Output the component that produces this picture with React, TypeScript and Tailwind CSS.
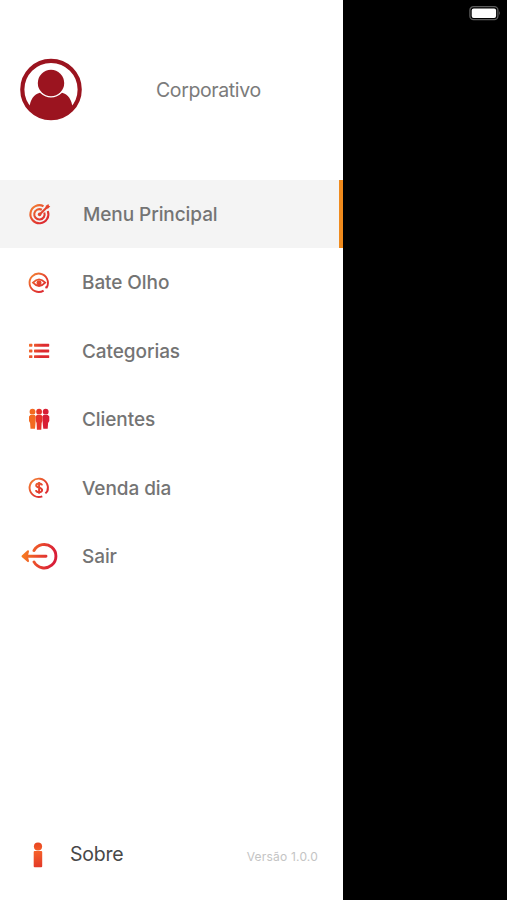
import React from "react";

interface MenuItem {
  id: string;
  label: string;
  icon: React.ComponentType;
  active?: boolean;
}

const menuItems: MenuItem[] = [
  { id: "menu-principal", label: "Menu Principal", icon: TargetIcon, active: true },
  { id: "bate-olho", label: "Bate Olho", icon: EyeIcon },
  { id: "categorias", label: "Categorias", icon: ListIcon },
  { id: "clientes", label: "Clientes", icon: PeopleIcon },
  { id: "venda-dia", label: "Venda dia", icon: DollarIcon },
  { id: "sair", label: "Sair", icon: ExitIcon },
];

export default function App() {
  return (
    <div className="flex h-screen w-full overflow-hidden bg-black font-['Inter',sans-serif]">
      <GradientDefs />
      <aside className="flex h-full w-[343px] shrink-0 flex-col bg-white">
        <header className="flex h-[180px] items-start pl-5 pt-[58px]">
          <Avatar />
          <span className="ml-[74px] mt-[17px] text-[19.5px] leading-[30px] tracking-[-0.38px] text-[#7b7b7b]">
            Corporativo
          </span>
        </header>

        <nav className="flex flex-col">
          {menuItems.map((item) => (
            <MenuRow key={item.id} item={item} />
          ))}
        </nav>

        <footer className="mt-auto flex h-[90px] items-center">
          <div className="flex w-[70px] pl-[33px]">
            <InfoIcon />
          </div>
          <span className="text-[19.5px] tracking-[-0.2px] text-[#484848]">Sobre</span>
          <span className="ml-auto mr-[25px] mt-1 text-xs tracking-[0.2px] text-[#c4c4c4]">
            Versão 1.0.0
          </span>
        </footer>
      </aside>

      <div className="flex flex-1 items-start justify-end pr-[6px] pt-[6px]">
        <Battery />
      </div>
    </div>
  );
}

function MenuRow({ item }: { item: MenuItem }) {
  const Icon = item.icon;
  return (
    <a
      className={
        item.active
          ? "flex h-[68.4px] items-center border-r-4 border-[#ef8a1d] bg-[#f4f4f4]"
          : "flex h-[68.4px] items-center"
      }
    >
      <span
        className={
          item.active
            ? "flex w-[83px] shrink-0 pl-[21px]"
            : "flex w-[82px] shrink-0 pl-5"
        }
      >
        <Icon />
      </span>
      <span className="pt-0.5 text-[19px] font-medium tracking-[-0.08px] text-[#747474]">
        {item.label}
      </span>
    </a>
  );
}

/* Shared orange to red gradients used by every menu icon */
function GradientDefs() {
  return (
    <svg className="absolute h-0 w-0" aria-hidden="true">
      <defs>
        <linearGradient id="warm" gradientUnits="userSpaceOnUse" x1="9" y1="5" x2="27" y2="24">
          <stop offset="0" stopColor="#f58a33" />
          <stop offset="0.5" stopColor="#e5452f" />
          <stop offset="1" stopColor="#d91f32" />
        </linearGradient>
        <linearGradient id="warmList" gradientUnits="userSpaceOnUse" x1="8" y1="10" x2="22" y2="14">
          <stop offset="0" stopColor="#f5702a" />
          <stop offset="1" stopColor="#dd2a30" />
        </linearGradient>
        <linearGradient id="warmWide" gradientUnits="userSpaceOnUse" x1="2" y1="10" x2="34" y2="18">
          <stop offset="0" stopColor="#f7801f" />
          <stop offset="0.5" stopColor="#ea4a2c" />
          <stop offset="1" stopColor="#d81e38" />
        </linearGradient>
        <linearGradient id="warmTall" gradientUnits="userSpaceOnUse" x1="0" y1="0" x2="4" y2="25">
          <stop offset="0" stopColor="#e5401f" />
          <stop offset="0.4" stopColor="#f5602a" />
          <stop offset="1" stopColor="#e33a28" />
        </linearGradient>
      </defs>
    </svg>
  );
}

function Avatar() {
  return (
    <svg width="62" height="63" viewBox="0 0 62 63">
      <circle cx="31" cy="31.5" r="28.7" fill="#fff" stroke="#9b141f" strokeWidth="4.2" />
      <circle cx="31" cy="25" r="13.2" fill="#9b141f" />
      <path
        d="M9.500 50 C10 42 14 36 20 34.800 C26 41.200 36 41.200 42 34.800 C48 36 52 42 52.500 50 C47 56.500 39.500 60 31 60 C22.500 60 15 56.500 9.500 50Z"
        fill="#9b141f"
      />
    </svg>
  );
}

function TargetIcon() {
  return (
    <svg width="38" height="28" viewBox="0 0 38 28" fill="none" stroke="url(#warm)" strokeWidth="2.100">
      <path d="M22.500 6.200 A9 9 0 1 0 26.800 11" />
      <path d="M20.800 9.700 A5.200 5.200 0 1 0 23.300 12.500" />
      <circle cx="18.600" cy="14.400" r="1.800" fill="url(#warm)" stroke="none" />
      <path d="M18.600 14.400 L27.500 5.700" />
      <path d="M24.300 8.800 L24.800 5.800 L27.500 4 L27.800 5.800 L29.300 6.200 L27.200 8.600Z" fill="url(#warm)" stroke="none" />
    </svg>
  );
}

function EyeIcon() {
  return (
    <svg width="38" height="28" viewBox="0 0 38 28" fill="none" stroke="url(#warm)" strokeWidth="1.900">
      <path d="M23.600 21.600 A9.200 9.200 0 1 1 26.700 18.400 L25.300 18.200" />
      <path d="M13 13.700 Q19 7.100 25.200 13.700 Q19 20.300 13 13.700Z" />
      <circle cx="19" cy="13.700" r="2.500" fill="url(#warm)" stroke="none" />
    </svg>
  );
}

function ListIcon() {
  return (
    <svg width="38" height="28" viewBox="0 0 38 28" fill="url(#warmList)">
      <rect x="9" y="6.800" width="3.400" height="2.900" rx="0.600" />
      <rect x="14" y="6.800" width="15.200" height="2.900" rx="0.600" />
      <rect x="9" y="12.500" width="3.400" height="2.900" rx="0.600" />
      <rect x="14" y="12.500" width="15.200" height="2.900" rx="0.600" />
      <rect x="9" y="18.200" width="3.400" height="2.900" rx="0.600" />
      <rect x="14" y="18.200" width="15.200" height="2.900" rx="0.600" />
    </svg>
  );
}

function PeopleIcon() {
  return (
    <svg width="38" height="28" viewBox="0 0 38 28">
      <g fill="#f36a20">
        <circle cx="12.500" cy="6.700" r="2.900" />
        <path d="M10.300 9.900 H14.800 L15.700 11.500 L15.500 18 L15 23.700 H10.500 L10.100 18 L9 16 V11.500Z" />
      </g>
      <g fill="#d81f35">
        <circle cx="25.700" cy="6.700" r="2.900" />
        <path d="M23.400 9.900 H27.900 L29.300 11.500 V16 L28.100 18 L27.700 23.700 H23.300 L22.700 18 L22.400 11.500Z" />
      </g>
      <g fill="#e53329">
        <circle cx="19.100" cy="6.700" r="2.900" />
        <path d="M16.800 9.900 H21.400 L22.500 11.500 L22.400 16 L21.600 18 L21.300 24.700 H16.900 L16.600 18 L15.800 16 L15.700 11.500Z" />
      </g>
    </svg>
  );
}

function DollarIcon() {
  return (
    <svg width="38" height="28" viewBox="0 0 38 28" fill="none" stroke="url(#warm)" strokeWidth="1.900">
      <path d="M22.300 22.300 A9.200 9.200 0 1 1 27.200 17.500 L25.400 19.400" />
      <path
        d="M22 11.400 C21.500 8.700 16.200 8.700 16.200 11.500 C16.200 14.300 22.100 13 22.100 16.100 C22.100 19 16.400 18.900 15.900 16.100 M19.100 8 V19.700"
        strokeWidth="2"
      />
    </svg>
  );
}

function ExitIcon() {
  return (
    <svg width="38" height="28" viewBox="0 0 38 28" fill="none" stroke="url(#warmWide)" strokeWidth="2.900" strokeLinecap="round">
      <path d="M14 8.500 A11.700 11.700 0 1 1 14 19.900" />
      <path d="M4 14.200 L26 14.300" />
      <path d="M8 9.300 L2.500 14.200 L8 19.100 L6.800 14.200Z" fill="url(#warmWide)" strokeWidth="2" strokeLinejoin="round" />
    </svg>
  );
}

function InfoIcon() {
  return (
    <svg width="10" height="26" viewBox="0 0 10 26" fill="url(#warmTall)">
      <circle cx="5" cy="4.500" r="4.100" />
      <rect x="0.700" y="8.900" width="8.500" height="16.300" rx="1" />
    </svg>
  );
}

function Battery() {
  return (
    <svg width="32" height="15" viewBox="0 0 32 15">
      <rect x="0.900" y="0.700" width="28" height="13" rx="3.600" fill="none" stroke="#5c5c5c" strokeWidth="1.300" />
      <rect x="2.700" y="2.500" width="24.400" height="9.400" rx="2" fill="#fff" />
      <path d="M30.200 5 Q31.700 7.200 30.200 9.400Z" fill="#777" />
    </svg>
  );
}
